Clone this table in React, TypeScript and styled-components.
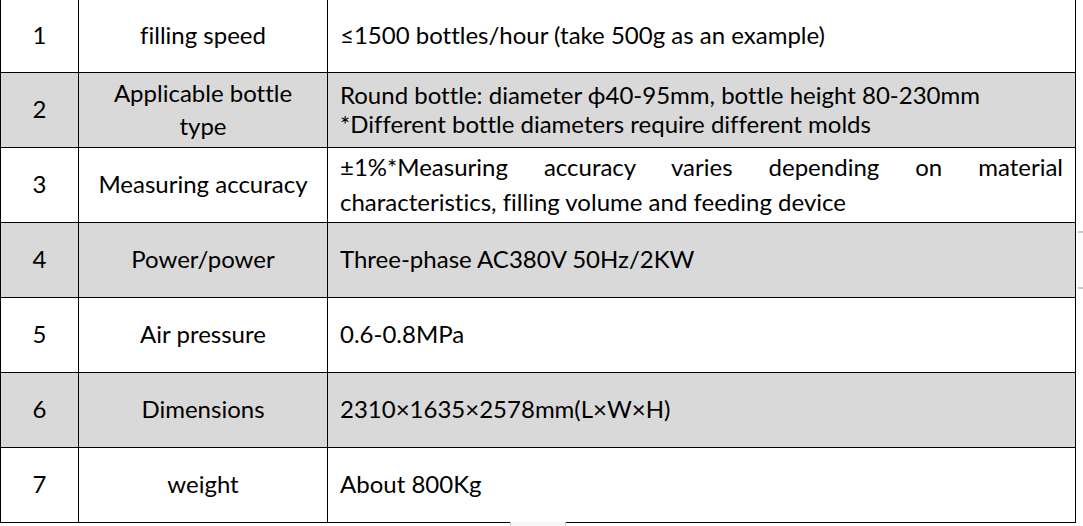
import React from "react";
import styled, { createGlobalStyle } from "styled-components";

const Global = createGlobalStyle`
  html, body { margin: 0; padding: 0; background: #ffffff; }
  body { font-family: Lato, "Liberation Sans", sans-serif; color: #000; font-variant-ligatures: none; }
`;

const Page = styled.div`
  position: relative;
  width: 1083px;
  height: 526px;
  overflow: hidden;
`;

const Table = styled.div`
  display: grid;
  grid-template-columns: 78px 249px 748px;
  border-left: 1px solid #000;
  width: 1075px;
`;

const Cell = styled.div<{ $shaded?: boolean; $h: number; $align?: "center" | "left" | "justify"; $lh?: number }>`
  box-sizing: border-box;
  height: ${(p) => p.$h}px;
  border-right: 1px solid #000;
  border-bottom: 1px solid #000;
  background: ${(p) => (p.$shaded ? "#d9d9d9" : "#ffffff")};
  display: flex;
  flex-direction: column;
  justify-content: center;
  padding: 0 12px 3px;
  font-size: 24px;
  line-height: ${(p) => p.$lh ?? 29}px;
  font-variant-ligatures: none;
  text-align: ${(p) => (p.$align === "left" ? "left" : p.$align === "justify" ? "justify" : "center")};
  text-align-last: ${(p) => (p.$align === "center" || !p.$align ? "center" : "left")};
  white-space: ${(p) => (p.$align === "justify" ? "normal" : "nowrap")};
`;

const JustLine = styled.span`
  display: block;
  text-align: justify;
  text-align-last: justify;
`;

const Marker = styled.div`
  position: absolute;
  right: 0;
  top: 231px;
  width: 5px;
  height: 54px;
  border-top: 2px solid #c8c8c8;
  border-bottom: 2px solid #c8c8c8;
  background: #fbfbfb;
`;

const FootMark = styled.div`
  position: absolute;
  left: 510px;
  top: 522px;
  width: 54px;
  height: 6px;
  border-left: 1px solid #c8c8c8;
  border-right: 1px solid #c8c8c8;
  background: #f7f7f7;
`;

type Row = { n: string; name: React.ReactNode; value: React.ReactNode; nameLh?: number; valueLh?: number; justify?: boolean };

const rows: Row[] = [
  { n: "1", name: "filling speed", value: "≤1500 bottles/hour (take 500g as an example)" },
  {
    n: "2",
    name: (<>Applicable bottle<br />type</>),
    nameLh: 33,
    value: (<>Round bottle: diameter ϕ40-95mm, bottle height 80-230mm<br />*Different bottle diameters require different molds</>),
  },
  {
    n: "3",
    name: "Measuring accuracy",
    value: (
      <>
        <JustLine>±1%*Measuring accuracy varies depending on material</JustLine>
        <span>characteristics, filling volume and feeding device</span>
      </>
    ),
    valueLh: 35,
    justify: true,
  },
  { n: "4", name: "Power/power", value: "Three-phase AC380V 50Hz/2KW" },
  { n: "5", name: "Air pressure", value: "0.6-0.8MPa" },
  { n: "6", name: "Dimensions", value: "2310×1635×2578mm(L×W×H)" },
  { n: "7", name: "weight", value: "About 800Kg" },
];

export default function App() {
  return (
    <Page>
      <Global />
      <Table>
        {rows.map((r, i) => {
          const shaded = i % 2 === 1;
          const h = i === 0 ? 73 : 75;
          return (
            <React.Fragment key={r.n}>
              <Cell $shaded={shaded} $h={h}>{r.n}</Cell>
              <Cell $shaded={shaded} $h={h} $lh={r.nameLh}>{r.name}</Cell>
              <Cell $shaded={shaded} $h={h} $lh={r.valueLh} $align={r.justify ? "justify" : "left"}>
                {r.justify ? r.value : <span>{r.value}</span>}
              </Cell>
            </React.Fragment>
          );
        })}
      </Table>
      <Marker />
      <FootMark />
    </Page>
  );
}
